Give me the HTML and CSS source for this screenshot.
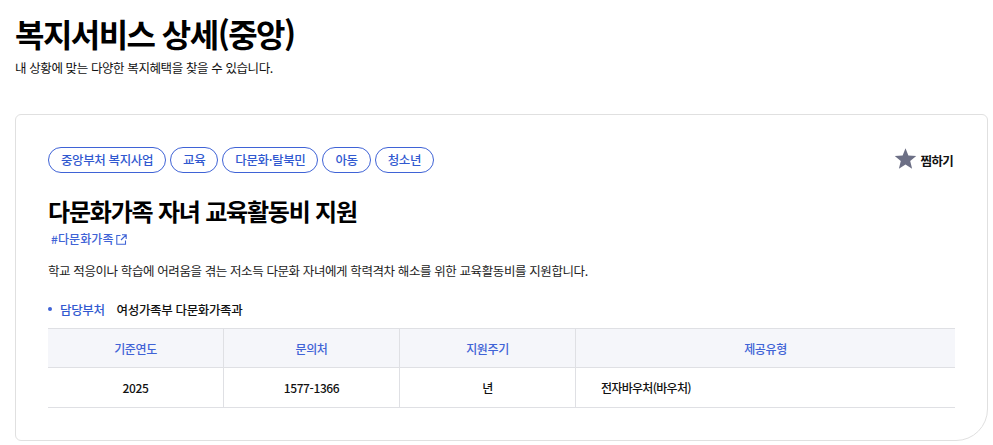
FILE: index.html
```html
<!DOCTYPE html>
<html lang="ko">
<head>
<meta charset="utf-8">
<title>복지서비스 상세(중앙)</title>
<link rel="stylesheet" href="styles.css">
</head>
<body>
<header class="page-head">
  <h1 class="page-title">복지서비스 상세(중앙)</h1>
  <p class="page-desc">내 상황에 맞는 다양한 복지혜택을 찾을 수 있습니다.</p>
</header>
<section class="card">
  <div class="top-row">
    <ul class="tags">
      <li class="tag">중앙부처 복지사업</li>
      <li class="tag">교육</li>
      <li class="tag">다문화·탈북민</li>
      <li class="tag">아동</li>
      <li class="tag">청소년</li>
    </ul>
    <button class="fav" type="button">
      <svg class="fav-icon" viewBox="0 0 24 24" width="23" height="23"><path d="M12 1.200l3 7.600 8.200.6-6.300 5.200 2 8-6.900-4.400-6.900 4.400 2-8L.8 9.400 9 8.800z"/></svg>
      <span>찜하기</span>
    </button>
  </div>
  <h2 class="title">다문화가족 자녀 교육활동비 지원</h2>
  <a class="hash" href="#">#다문화가족
    <svg class="ext" viewBox="0 0 11 11" width="11" height="11"><path d="M4.500 1.500H.8v8.700h8.700V6.500M6 .8h4.200V5M10 1L5 6"/></svg>
  </a>
  <p class="summary">학교 적응이나 학습에 어려움을 겪는 저소득 다문화 자녀에게 학력격차 해소를 위한 교육활동비를 지원합니다.</p>
  <div class="dept">
    <span class="dot"></span>
    <span class="dept-label">담당부처</span>
    <span class="dept-value">여성가족부 다문화가족과</span>
  </div>
  <div class="info">
    <div class="cell head">기준연도</div>
    <div class="cell head">문의처</div>
    <div class="cell head">지원주기</div>
    <div class="cell head">제공유형</div>
    <div class="cell val">2025</div>
    <div class="cell val">1577-1366</div>
    <div class="cell val">년</div>
    <div class="cell val left">전자바우처(바우처)</div>
  </div>
</section>
</body>
</html>
```

FILE: styles.css
```css
* { box-sizing: border-box; }
html, body { margin: 0; padding: 0; }
body {
  background: #fff;
  color: #111;
  font-family: "Noto Sans CJK KR", "Noto Sans", sans-serif;
  padding: 0 5px 0 15px;
}
.page-head { height: 114px; padding-top: 11px; }
.page-title {
  margin: 0;
  font-size: 32px;
  line-height: 44px;
  font-weight: 700;
  letter-spacing: -1.550px;
  color: #000;
}
.page-desc {
  margin: 3px 0 0;
  font-size: 12.500px;
  line-height: 20px;
  letter-spacing: -0.4px;
  color: #111;
}
.card {
  height: 327px;
  border: 1px solid #e0e0e0;
  border-radius: 6px 6px 32px 6px;
  padding: 32px 32px 0;
}
.top-row {
  display: flex;
  justify-content: space-between;
  align-items: center;
}
.tags {
  display: flex;
  gap: 4px;
  list-style: none;
  margin: 0;
  padding: 0;
}
.tag {
  height: 26px;
  padding: 0 12px;
  border: 1px solid #3f63d6;
  border-radius: 13px;
  color: #3159d0;
  font-size: 12.500px;
  line-height: 23px;
  letter-spacing: -0.380px;
  font-weight: 500;
}
.fav {
  display: flex;
  align-items: center;
  gap: 4px;
  border: 0;
  background: none;
  padding: 0;
  margin-right: 2px;
  font: inherit;
  font-size: 12.500px;
  font-weight: 700;
  letter-spacing: -0.700px;
  color: #111;
}
.fav-icon { fill: #6c6f85; margin-bottom: 3px; }
.title {
  margin: 21px 0 0;
  font-size: 24px;
  line-height: 34px;
  font-weight: 700;
  letter-spacing: -1.200px;
  color: #000;
}
.hash {
  display: flex;
  align-items: center;
  gap: 2px;
  margin: 3px 0 0 3px;
  font-size: 12px;
  line-height: 16px;
  font-weight: 500;
  color: #3f63d6;
  text-decoration: none;
  letter-spacing: 0.100px;
}
.ext { fill: none; stroke: #3f63d6; stroke-width: 1.100; }
.summary {
  margin: 14px 0 0;
  font-size: 12.500px;
  line-height: 20px;
  letter-spacing: -0.400px;
  color: #222;
}
.dept {
  display: flex;
  align-items: center;
  margin-top: 18px;
  height: 20px;
  font-size: 12.500px;
  letter-spacing: -0.350px;
}
.dot {
  width: 4px;
  height: 4px;
  margin: 0 8px 0 0;
  border-radius: 50%;
  background: #3f63d6;
}
.dept-label { color: #3159d0; font-weight: 500; margin-right: 12px; }
.dept-value { font-weight: 500; color: #111; }
.info {
  display: grid;
  grid-template-columns: 176px 176px 176px 1fr;
  grid-template-rows: 39px 40px;
  margin-top: 9px;
  border-top: 1px solid #dfe0e4;
}
.cell {
  display: flex;
  align-items: center;
  justify-content: center;
  font-size: 12px;
  letter-spacing: -0.400px;
  border-bottom: 1px solid #dfe0e4;
  border-right: 1px solid #dfe0e4;
}
.cell:nth-child(4n) { border-right: 0; }
.head { background: #f5f6fa; color: #3f63d6; font-weight: 500; }
.val { color: #111; font-weight: 500; }
.left { justify-content: flex-start; padding-left: 25px; letter-spacing: -0.700px; }
```
